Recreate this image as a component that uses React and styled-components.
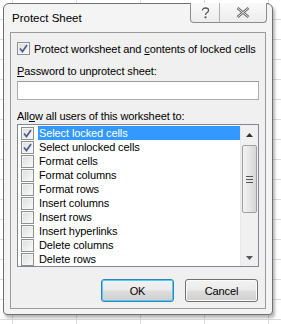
import React from 'react';
import styled, { createGlobalStyle } from 'styled-components';

const Global = createGlobalStyle`
  html, body { margin: 0; padding: 0; }
  body {
    width: 281px;
    height: 324px;
    overflow: hidden;
    font-family: "Liberation Sans", Arial, sans-serif;
    font-size: 11px;
    letter-spacing: -0.1px;
    color: #000;
    white-space: nowrap;
    background-color: #fff;
    background-image:
      linear-gradient(to right, #dadcdd 1px, transparent 1px),
      linear-gradient(to bottom, #dadcdd 1px, transparent 1px);
    background-size: 64px 20px;
    background-position: 12px 19px;
  }
`;

const Window = styled.div`
  margin: 3px 0 0 3px;
  width: 270px;
  height: 312px;
  box-sizing: border-box;
  border: 1px solid #707070;
  border-radius: 6px 6px 4px 4px;
  background: #f4f4f4;
  box-shadow: 2px 3px 3px rgba(0, 0, 0, 0.28);
  display: flex;
  flex-direction: column;
  padding: 0 6px 5px 6px;
`;

const TitleBar = styled.div`
  height: 28px;
  display: flex;
  align-items: flex-start;
  justify-content: space-between;
`;

const Title = styled.div`
  padding: 8px 0 0 2px;
  font-size: 11.5px;
  letter-spacing: 0;
`;

const Caption = styled.div`
  display: flex;
  margin-top: -1px;
  margin-right: -1px;
  height: 19px;
  border: 1px solid #8c8c8c;
  border-top: none;
  border-radius: 0 0 4px 4px;
  background: linear-gradient(#fafafa, #ececec);
  overflow: hidden;
`;

const CaptionButton = styled.div`
  width: ${p => p.w}px;
  display: flex;
  align-items: center;
  justify-content: center;
  & + & { border-left: 1px solid #b0b0b0; }
`;

const Panel = styled.div`
  flex: 1;
  border: 1px solid #9b9b9b;
  background: #f0f0f0;
  padding: 9px 6px 0 6px;
  display: flex;
  flex-direction: column;
`;

const CheckRow = styled.div`
  display: flex;
  align-items: center;
  gap: 4px;
  height: ${p => p.h || 14}px;
`;

const Box = styled.span`
  width: 11px;
  height: 11px;
  flex: none;
  border: 1px solid #8e8f8f;
  background: linear-gradient(135deg, #dcdcdc, #fbfbfb);
  box-shadow: inset 0 0 0 1px #f4f4f4;
  display: flex;
  align-items: center;
  justify-content: center;
`;

const Label = styled.div`
  margin-top: ${p => p.mt}px;
  height: 14px;
  line-height: 14px;
`;

const Input = styled.div`
  margin-top: 3px;
  height: 17px;
  border: 1px solid #abadb3;
  border-top-color: #9a9a9a;
  background: #fff;
`;

const List = styled.div`
  margin-top: 1px;
  height: 141px;
  border: 1px solid #828790;
  background: #fff;
  display: flex;
`;

const Items = styled.div`
  flex: 1;
  padding: 1px 0 0 3px;
  display: flex;
  flex-direction: column;
`;

const ItemText = styled.span`
  flex: 1;
  height: 14px;
  line-height: 14px;
  padding-left: 1px;
  background: ${p => (p.sel ? '#3399ff' : 'transparent')};
  color: ${p => (p.sel ? '#fff' : '#000')};
`;

const Scroll = styled.div`
  width: 17px;
  background: #f0f0f0;
  border-left: 1px solid #e8e8e8;
  display: flex;
  flex-direction: column;
  align-items: center;
`;

const Arrow = styled.div`
  height: ${p => p.h}px;
  width: 17px;
  display: flex;
  align-items: center;
  justify-content: center;
`;

const Thumb = styled.div`
  width: 15px;
  height: 68px;
  box-sizing: border-box;
  border: 1px solid #a0a0a0;
  border-radius: 2px;
  background: linear-gradient(to right, #f3f3f3, #e6e6e6 50%, #d6d6d6);
  display: flex;
  flex-direction: column;
  align-items: center;
  justify-content: center;
  gap: 2px;
  span { width: 7px; height: 1px; background: #555; }
`;

const Spacer = styled.div`
  flex: 1;
`;

const Buttons = styled.div`
  margin-top: 12px;
  margin-right: 1px;
  display: flex;
  justify-content: flex-end;
  gap: 11px;
`;

const Button = styled.div`
  width: 73px;
  height: 23px;
  box-sizing: border-box;
  border: 1px solid ${p => (p.def ? '#3c7fb1' : '#707070')};
  border-radius: 3px;
  background: linear-gradient(#f2f2f2 0%, #ebebeb 48%, #dddddd 52%, #cfcfcf 100%);
  box-shadow: inset 0 0 0 1px ${p => (p.def ? '#48d0fb' : '#fbfbfb')};
  display: flex;
  align-items: center;
  justify-content: center;
`;

const U = styled.span`
  text-decoration: underline;
  text-underline-offset: 1px;
`;

const Check = () => (
  <svg width="9" height="9" viewBox="0 0 9 9">
    <path d="M1 4.5 L3.5 7.5 L8 1" fill="none" stroke="#4a5d8f" strokeWidth="1.7" />
  </svg>
);

const CheckBox = ({ checked }) => <Box>{checked && <Check />}</Box>;

const items = [
  ['Select locked cells', true],
  ['Select unlocked cells', true],
  ['Format cells', false],
  ['Format columns', false],
  ['Format rows', false],
  ['Insert columns', false],
  ['Insert rows', false],
  ['Insert hyperlinks', false],
  ['Delete columns', false],
  ['Delete rows', false],
];

export default function App() {
  return (
    <>
      <Global />
      <Window>
        <TitleBar>
          <Title>Protect Sheet</Title>
          <Caption>
            <CaptionButton w={28}>
              <svg width="9" height="12" viewBox="0 0 9 12">
                <path d="M1.5 3.5 Q1.5 1 4.5 1 Q7.5 1 7.5 3.5 Q7.5 5 5.5 6 Q4.5 6.6 4.5 8" fill="none" stroke="#555" strokeWidth="1.3" />
                <rect x="3.6" y="9.4" width="1.8" height="1.8" fill="#555" />
              </svg>
            </CaptionButton>
            <CaptionButton w={46}>
              <svg width="14" height="11" viewBox="0 0 14 11">
                <path d="M1.5 1 L12.5 10 M12.5 1 L1.5 10" stroke="#666" strokeWidth="2.6" />
                <path d="M1.5 1 L12.5 10 M12.5 1 L1.5 10" stroke="#f4f4f4" strokeWidth="0.9" />
              </svg>
            </CaptionButton>
          </Caption>
        </TitleBar>
        <Panel>
          <CheckRow h={13}>
            <CheckBox checked />
            <span>Protect worksheet and <U>c</U>ontents of locked cells</span>
          </CheckRow>
          <Label mt={9}><U>P</U>assword to unprotect sheet:</Label>
          <Input />
          <Label mt={9}>All<U>o</U>w all users of this worksheet to:</Label>
          <List>
            <Items>
              {items.map(([name, on], i) => (
                <CheckRow key={name}>
                  <CheckBox checked={on} />
                  <ItemText sel={i === 0}>{name}</ItemText>
                </CheckRow>
              ))}
            </Items>
            <Scroll>
              <Arrow h={20}>
                <svg width="7" height="4" viewBox="0 0 7 4"><path d="M0 4 L3.5 0 L7 4 Z" fill="#333" /></svg>
              </Arrow>
              <Thumb><span /><span /><span /></Thumb>
              <Spacer />
              <Arrow h={17}>
                <svg width="7" height="4" viewBox="0 0 7 4"><path d="M0 0 L3.5 4 L7 0 Z" fill="#555" /></svg>
              </Arrow>
            </Scroll>
          </List>
          <Buttons>
            <Button def>OK</Button>
            <Button>Cancel</Button>
          </Buttons>
        </Panel>
      </Window>
    </>
  );
}
